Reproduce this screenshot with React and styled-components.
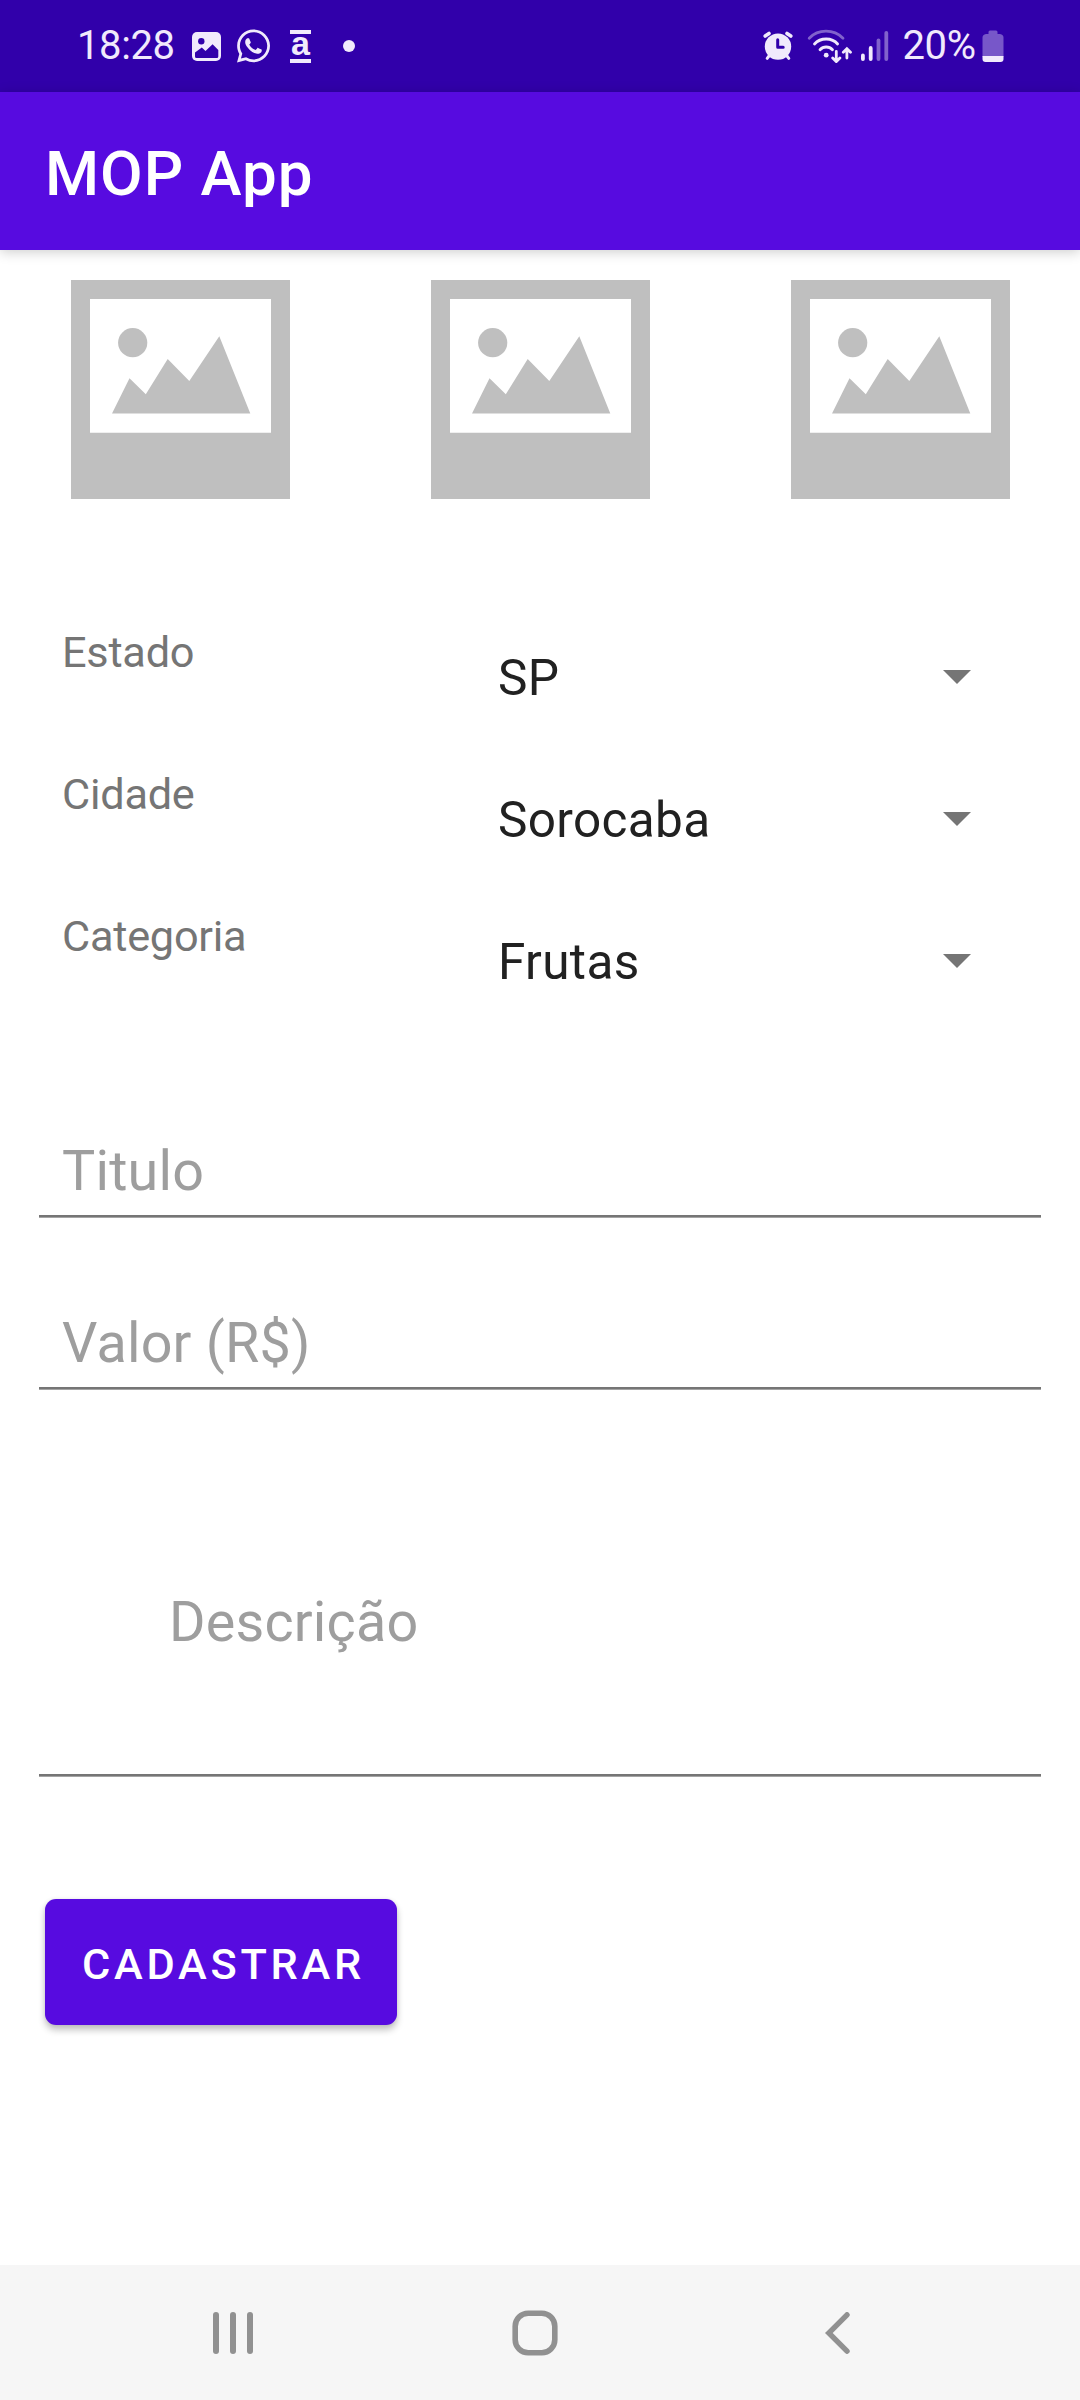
import React from "react";
import styled, { createGlobalStyle } from "styled-components";
import { FaWhatsapp } from "react-icons/fa";

const Global = createGlobalStyle`
  * { box-sizing: border-box; }
  body { margin: 0; background: #fff; font-family: Roboto, "Liberation Sans", sans-serif; }
`;

const TINT = "#f1eafc";

const Screen = styled.div`
  width: 1080px;
  height: 2400px;
  display: flex;
  flex-direction: column;
  background: #fff;
  overflow: hidden;
`;

const StatusBar = styled.header`
  height: 92px;
  flex: none;
  display: flex;
  justify-content: space-between;
  padding: 0 76px 0 77px;
  background: #3100aa;
  color: ${TINT};
`;

const StatusGroup = styled.div`
  display: flex;
  align-items: center;
`;

const StatusText = styled.span`
  width: ${(p) => p.$w}px;
  margin-left: ${(p) => p.$gap || 0}px;
  font-size: 40px;
  line-height: 92px;
  letter-spacing: -0.4px;
  white-space: nowrap;
`;

const Glyph = styled.svg`
  display: block;
  flex: none;
  width: ${(p) => p.$w}px;
  height: ${(p) => p.$h}px;
  margin-left: ${(p) => p.$gap || 0}px;
`;

const WhatsAppMark = styled(FaWhatsapp)`
  width: 33px;
  height: 38px;
  margin-left: 16px;
`;

const StoreMark = styled.span`
  width: 21px;
  height: 33px;
  margin-left: 20px;
  border: solid ${TINT};
  border-width: 4px 0;
  font: bold 34px/18px "Liberation Sans", Arial, sans-serif;
  display: flex;
  justify-content: center;
`;

const Dot = styled.span`
  width: 12px;
  height: 12px;
  margin-left: 32px;
  border-radius: 50%;
  background: ${TINT};
`;

const AppBar = styled.div`
  height: 158px;
  flex: none;
  padding: 6px 0 0 45px;
  background: #570be0;
  box-shadow: 0 2px 12px rgba(0, 0, 0, 0.2);
`;

const Title = styled.h1`
  margin: 0;
  color: #fff;
  font-size: 61.9px;
  font-weight: 500;
  line-height: 152px;
  letter-spacing: 0.95px;
`;

const Main = styled.main`
  flex: 1;
  display: flex;
  flex-direction: column;
`;

const Gallery = styled.section`
  display: grid;
  grid-template-columns: repeat(3, 360px);
  padding-top: 30px;
  height: 376px;
`;

const PhotoSlot = styled.div`
  padding-left: 71px;
`;

const Row = styled.div`
  display: grid;
  grid-template-columns: 436px 445px 28px;
  height: 142px;
  padding-left: 62px;
`;

const Label = styled.span`
  padding-top: 1px;
  color: #757575;
  font-size: 43.3px;
  line-height: 52px;
  letter-spacing: -0.25px;
`;

const Value = styled.span`
  padding-top: 22px;
  color: #212121;
  font-size: 49.5px;
  line-height: 60px;
  letter-spacing: 0.35px;
`;

const Caret = styled.svg`
  width: 28px;
  height: 14px;
  margin-top: 44px;
  fill: #757575;
`;

const Field = styled.div`
  width: 1002px;
  height: ${(p) => p.$h}px;
  margin: ${(p) => p.$top}px 0 1px 39px;
  padding-left: ${(p) => p.$indent}px;
  border-bottom: 2px solid #757575;
  box-shadow: 0 1px #a4a4a4;
  color: #9e9e9e;
  font-size: 55.7px;
  line-height: 66px;
  letter-spacing: 0.2px;
`;

const Submit = styled.button`
  width: 352px;
  height: 126px;
  margin: 122px 0 0 45px;
  padding: 6px 0 0 37px;
  border: 0;
  border-radius: 11px;
  background: #570be0;
  box-shadow: 0 5px 7px rgba(0, 0, 0, 0.24), 0 0 4px rgba(0, 0, 0, 0.08);
  color: #fff;
  font: 500 43.3px/60px Roboto, sans-serif;
  letter-spacing: 3.75px;
  text-align: left;
`;

const NavBar = styled.nav`
  height: 135px;
  flex: none;
  display: flex;
  align-items: center;
  padding-left: 213px;
  background: #f6f6f6;
`;

function PolaroidPlaceholder() {
  return (
    <Glyph $w={219} $h={219} viewBox="0 0 219 219">
      <path fill="#bfbfbf" fillRule="evenodd" d="M0 0H219V219H0ZM19 19V152.7H200V19Z" />
      <circle cx="61.7" cy="62.7" r="14.6" fill="#bfbfbf" />
      <path fill="#bfbfbf" d="M41 133.6L58.5 98.3 74.8 114.3 96.7 79 118.3 101 148.3 56.3 179.3 133.6Z" />
    </Glyph>
  );
}

const selections = [
  ["Estado", "SP"],
  ["Cidade", "Sorocaba"],
  ["Categoria", "Frutas"],
];

export default function App() {
  return (
    <Screen>
      <Global />
      <StatusBar>
        <StatusGroup>
          <StatusText $w={99}>18:28</StatusText>
          <Glyph $w={29} $h={29} $gap={16} viewBox="0 0 29 29">
            <rect width="29" height="29" rx="5" fill={TINT} />
            <circle cx="9.3" cy="9.2" r="3.2" fill="#3100aa" />
            <path fill="#3100aa" d="M3 20.5L9.8 15.5 13.5 19 20.6 12.2 26.3 18V24.5Q26.3 26 24.8 26H4.5Q3 26 3 24.5Z" />
          </Glyph>
          <WhatsAppMark />
          <StoreMark>a</StoreMark>
          <Dot />
        </StatusGroup>
        <StatusGroup>
          <Glyph $w={30} $h={30} viewBox="0 0 30 30">
            <g stroke={TINT} strokeLinecap="round" fill="none">
              <path strokeWidth="3.6" d="M2.2 5L6 2.4M27.8 5L24 2.4" />
              <path strokeWidth="3" d="M6 25L4.2 27.3M24 25L25.8 27.3" />
            </g>
            <circle cx="15" cy="15.6" r="13.2" fill={TINT} />
            <path d="M14.7 8.8V16.2H20.2" fill="none" stroke="#3100aa" strokeWidth="3" strokeLinecap="round" strokeLinejoin="round" />
          </Glyph>
          <Glyph $w={46} $h={34} $gap={14} viewBox="0 0 46 34">
            <g fill="none" stroke={TINT} strokeWidth="2.8" strokeLinecap="round">
              <path opacity=".42" d="M2.2 9.2Q9 2.2 19 2.2T36 9.2" />
              <path d="M7.5 15Q12 10 19.2 10T30.6 15" />
              <path d="M13 20.8Q15.5 18 19.2 18T25.5 20.8" />
              <path d="M29.3 22.5V32M25.7 29L29.3 32.6 32.9 29M39.9 29V20.5M36.3 23.3L39.9 19.7 43.5 23.3" />
            </g>
            <circle cx="19.2" cy="26.2" r="2.4" fill={TINT} />
          </Glyph>
          <Glyph $w={28} $h={30} $gap={8} viewBox="0 0 28 30">
            <g fill={TINT}>
              <rect x="0" y="22.5" width="3.8" height="7.5" rx="1.9" />
              <rect x="7.8" y="15" width="3.8" height="15" rx="1.9" />
              <rect x="15.6" y="7.5" width="3.8" height="22.5" rx="1.9" opacity=".42" />
              <rect x="23.4" y="0" width="3.8" height="30" rx="1.9" opacity=".42" />
            </g>
          </Glyph>
          <StatusText $w={74} $gap={13.5}>20%</StatusText>
          <Glyph $w={22} $h={32} $gap={5.5} viewBox="0 0 22 32">
            <path fill="#7757c9" d="M6.5 2Q6.5 .5 8 .5H14Q15.5 .5 15.5 2V4H18Q21.5 4.5 21.5 7.5V27H.5V7.5Q.5 4.5 4 4H6.5Z" />
            <path fill={TINT} d="M.5 26H21.5V29Q21.5 32 18.5 32H3.5Q.5 32 .5 29Z" />
          </Glyph>
        </StatusGroup>
      </StatusBar>

      <AppBar>
        <Title>MOP App</Title>
      </AppBar>

      <Main>
        <Gallery>
          {[0, 1, 2].map((slot) => (
            <PhotoSlot key={slot}>
              <PolaroidPlaceholder />
            </PhotoSlot>
          ))}
        </Gallery>

        {selections.map(([label, value]) => (
          <Row key={label}>
            <Label>{label}</Label>
            <Value>{value}</Value>
            <Caret viewBox="0 0 28 14">
              <path d="M0 0H28L14 14Z" />
            </Caret>
          </Row>
        ))}

        <Field $h={79} $top={86} $indent={23}>Titulo</Field>
        <Field $h={79} $top={92} $indent={23}>Valor (R$)</Field>
        <Field $h={187} $top={199} $indent={130}>Descrição</Field>

        <Submit type="button">CADASTRAR</Submit>
      </Main>

      <NavBar>
        <Glyph $w={40} $h={42} viewBox="0 0 40 42">
          <g fill="#919191">
            <rect x="0" width="6" height="42" rx="3" />
            <rect x="17" width="6" height="42" rx="3" />
            <rect x="34" width="6" height="42" rx="3" />
          </g>
        </Glyph>
        <Glyph $w={46} $h={46} $gap={259} viewBox="0 0 46 46">
          <rect x="3.2" y="3.2" width="39.6" height="39.6" rx="13" fill="none" stroke="#919191" strokeWidth="5.6" />
        </Glyph>
        <Glyph $w={25} $h={42} $gap={267} viewBox="0 0 25 42">
          <path d="M22 2.8L3.8 21 22 39.2" fill="none" stroke="#919191" strokeWidth="5.4" strokeLinecap="round" />
        </Glyph>
      </NavBar>
    </Screen>
  );
}
